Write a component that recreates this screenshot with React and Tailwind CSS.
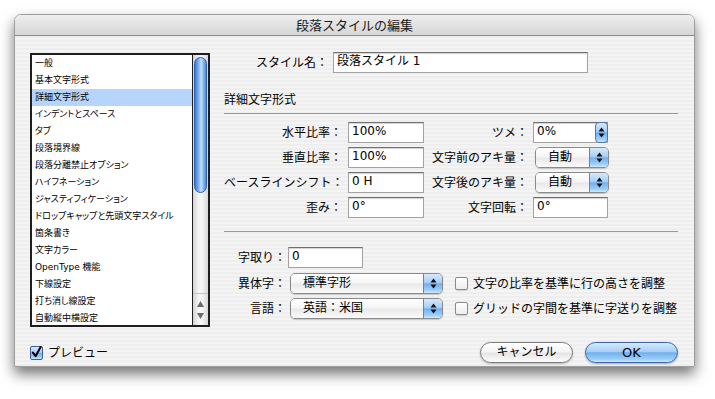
const LIST = [
  '一般',
  '基本文字形式',
  '詳細文字形式',
  'インデントとスペース',
  'タブ',
  '段落境界線',
  '段落分離禁止オプション',
  'ハイフネーション',
  'ジャスティフィケーション',
  'ドロップキャップと先頭文字スタイル',
  '箇条書き',
  '文字カラー',
  'OpenType 機能',
  '下線設定',
  '打ち消し線設定',
  '自動縦中横設定',
];

const GRID = [
  { label: '水平比率：', value: '100%', rLabel: 'ツメ：', rKind: 'stepper', rValue: '0%' },
  { label: '垂直比率：', value: '100%', rLabel: '文字前のアキ量：', rKind: 'popup', rValue: '自動' },
  { label: 'ベースラインシフト：', value: '0 H', rLabel: '文字後のアキ量：', rKind: 'popup', rValue: '自動' },
  { label: '歪み：', value: '0°', rLabel: '文字回転：', rKind: 'field', rValue: '0°' },
];

const BLUE =
  'bg-[linear-gradient(180deg,#d7e9fc_0%,#a6cef6_45%,#73afee_52%,#9ccff9_85%,#cfe9fd_100%)]';

export default function App() {
  return (
    <div className="w-[715px] h-[399px] bg-white pt-[14px] pl-[14px] text-black [font-family:'DejaVu_Sans','Noto_Sans_CJK_JP',sans-serif]">
      <div className="w-[681px] h-[353px] flex flex-col rounded-t-[7px] border border-[#9d9d9d] overflow-hidden shadow-[0_7px_14px_rgba(0,0,0,0.55)]">
        <div className="h-[21px] shrink-0 border-b border-[#8c8c8c] bg-[linear-gradient(180deg,#eeeeee,#d6d6d6)] text-center text-[13px] leading-[21px] text-[#1a1a1a]">
          段落スタイルの編集
        </div>
        <div className="flex-1 flex flex-col pl-[15px] pr-[16px] pt-[16px] bg-[repeating-linear-gradient(180deg,#eeeeee_0px,#eeeeee_2px,#f4f4f4_2px,#f4f4f4_4px)]">
          <div className="flex items-start">
            <ListBox />
            <div className="ml-[14px] w-[454px]">
              <div className="flex items-center h-[21px]">
                <div className="w-[104px] text-right text-[12px]">スタイル名：</div>
                <Field className="ml-[5px] w-[255px]" value="段落スタイル 1" />
              </div>
              <div className="mt-[19px] h-[22px] border-b border-[#9a9a9a] text-[12px] leading-[16px]">
                詳細文字形式
              </div>
              <div className="mt-[8px] flex flex-col gap-[4px]">
                {GRID.map((r) => (
                  <div key={r.label} className="flex items-center h-[21px]">
                    <div className="w-[118px] text-right text-[12px] whitespace-nowrap">{r.label}</div>
                    <Field className="ml-[6px] w-[76px]" value={r.value} />
                    <div className="w-[104px] text-right text-[12px] whitespace-nowrap">{r.rLabel}</div>
                    {r.rKind === 'popup' ? (
                      <Popup className="ml-[7px] w-[74px]" value={r.rValue} />
                    ) : r.rKind === 'stepper' ? (
                      <div className="ml-[5px] w-[75px] flex items-center">
                        <Field className="flex-1" value={r.rValue} />
                        <Stepper />
                      </div>
                    ) : (
                      <Field className="ml-[5px] w-[75px]" value={r.rValue} />
                    )}
                  </div>
                ))}
              </div>
              <div className="mt-[13px] border-t border-[#9a9a9a]" />
              <div className="mt-[15px] flex items-center h-[21px]">
                <div className="w-[62px] text-right text-[12px]">字取り：</div>
                <Field className="ml-[2px] w-[75px]" value="0" />
              </div>
              <div className="mt-[5px] flex items-center h-[21px]">
                <div className="w-[62px] text-right text-[12px]">異体字：</div>
                <Popup className="ml-[4px] w-[153px]" value="標準字形" />
                <CheckBox className="ml-[12px]" />
                <div className="ml-[5px] text-[12px] whitespace-nowrap">文字の比率を基準に行の高さを調整</div>
              </div>
              <div className="mt-[4px] flex items-center h-[21px]">
                <div className="w-[62px] text-right text-[12px]">言語：</div>
                <Popup className="ml-[4px] w-[153px]" value="英語：米国" />
                <CheckBox className="ml-[12px]" />
                <div className="ml-[5px] text-[12px] whitespace-nowrap">グリッドの字間を基準に字送りを調整</div>
              </div>
            </div>
          </div>

          <div className="mt-[15px] flex items-center h-[21px]">
            <div className={`w-[13px] h-[14px] rounded-[2px] border border-[#3b5f97] flex items-center justify-center ${BLUE}`}>
              <svg width="12" height="13" viewBox="0 0 12 13">
                <path d="M2 6.5 L5 10.5 L10.5 0.5" fill="none" stroke="#000" strokeWidth="2.2" strokeLinecap="round" strokeLinejoin="round" />
              </svg>
            </div>
            <div className="ml-[5px] text-[12px]">プレビュー</div>
            <div className="ml-auto flex gap-[12px]">
              <button className="w-[93px] h-[21px] rounded-full border border-[#7b7b7b] bg-[linear-gradient(180deg,#ffffff,#f4f4f4_48%,#e4e4e4_52%,#fcfcfc)] shadow-[0_1px_2px_rgba(0,0,0,0.25)] text-[12px] leading-[19px]">
                キャンセル
              </button>
              <button className={`w-[93px] h-[21px] rounded-full border border-[#3b65a8] shadow-[0_1px_2px_rgba(0,0,0,0.3)] text-[13px] leading-[19px] ${BLUE}`}>
                OK
              </button>
            </div>
          </div>
        </div>
      </div>
    </div>
  );
}

function ListBox() {
  return (
    <div className="mt-[1px] w-[180px] h-[274px] border-2 border-[#1e1e1e] bg-white flex overflow-hidden">
      <div className="w-[160px] [font-feature-settings:'palt']">
        {LIST.map((item, i) => (
          <div
            key={item}
            className={`h-[17px] pl-[3px] text-[9px] leading-[17px] whitespace-nowrap ${i === 2 ? 'bg-[#b7d4fb]' : ''}`}
          >
            {item}
          </div>
        ))}
      </div>
      <div className="w-[16px] border-l border-[#1e1e1e] flex flex-col bg-[linear-gradient(90deg,#d4d4d4,#f6f6f6_40%,#f6f6f6_60%,#d8d8d8)]">
        <div className="flex-1 px-[1px] pt-[2px]">
          <div className="h-[136px] rounded-full border border-[#2f62b3] bg-[linear-gradient(90deg,#3b77d0,#8cc0f3_40%,#c2e2fc_55%,#4b88d8)]" />
        </div>
        <div className="h-[32px] flex flex-col items-center justify-center gap-[6px] border-t border-[#c4c4c4]">
          <svg width="7" height="6" viewBox="0 0 7 6"><path d="M3.5 0 L7 6 L0 6 Z" fill="#6a6a6a" /></svg>
          <svg width="7" height="6" viewBox="0 0 7 6"><path d="M0 0 L7 0 L3.5 6 Z" fill="#6a6a6a" /></svg>
        </div>
      </div>
    </div>
  );
}

function Field({ value, className = '' }) {
  return (
    <div
      className={`h-[21px] bg-white border border-[#a3a3a3] border-t-[#707070] shadow-[inset_0_1px_1px_rgba(0,0,0,0.18)] pl-[3px] text-[12px] leading-[17px] whitespace-nowrap overflow-hidden ${className}`}
    >
      {value}
    </div>
  );
}

function Arrows() {
  return (
    <svg width="7" height="11" viewBox="0 0 7 11">
      <path d="M3.5 0.5 L6.5 4.5 L0.5 4.5 Z" fill="#111" />
      <path d="M0.5 6.5 L6.5 6.5 L3.5 10.5 Z" fill="#111" />
    </svg>
  );
}

function Popup({ value, className = '' }) {
  return (
    <div
      className={`h-[21px] flex rounded-[5px] border border-[#8a8a8a] overflow-hidden shadow-[0_1px_1px_rgba(0,0,0,0.18)] ${className}`}
    >
      <div className="flex-1 pl-[12px] text-[12px] leading-[19px] whitespace-nowrap bg-[linear-gradient(180deg,#ffffff,#f5f5f5_48%,#e8e8e8_52%,#fbfbfb)]">
        {value}
      </div>
      <div className={`w-[19px] border-l border-[#5a86c5] flex items-center justify-center ${BLUE}`}>
        <Arrows />
      </div>
    </div>
  );
}

function Stepper() {
  return (
    <div className={`w-[13px] h-[21px] -ml-[13px] rounded-[4px] border border-[#4a76b8] flex items-center justify-center ${BLUE}`}>
      <Arrows />
    </div>
  );
}

function CheckBox({ className = '' }) {
  return (
    <div
      className={`w-[13px] h-[13px] rounded-[2px] border border-[#8a8a8a] bg-[linear-gradient(180deg,#ffffff,#ededed)] shadow-[0_1px_1px_rgba(0,0,0,0.15)] ${className}`}
    />
  );
}
